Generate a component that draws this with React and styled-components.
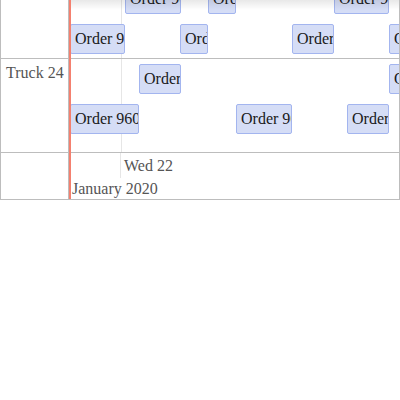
import React from "react";
import styled, { createGlobalStyle } from "styled-components";

const GlobalStyle = createGlobalStyle`
  body {
    margin: 0;
    background: #fff;
    font-family: "Liberation Serif", "Times New Roman", serif;
  }
`;

const rows = [
  {
    id: "r23",
    name: "",
    height: 59,
    events: [
      { id: 1, label: "Order 9612", left: 56, width: 56, top: -16 },
      { id: 2, label: "Order 9615", left: 139, width: 28, top: -16 },
      { id: 3, label: "Order 9621", left: 265, width: 55, top: -16 },
      { id: 4, label: "Order 9608", left: 1, width: 55, top: 24 },
      { id: 5, label: "Order 9613", left: 111, width: 28, top: 24 },
      { id: 6, label: "Order 9618", left: 223, width: 42, top: 24 },
      { id: 7, label: "Order 9624", left: 320, width: 40, top: 24 },
    ],
  },
  {
    id: "r24",
    name: "Truck 24",
    height: 94,
    events: [
      { id: 8, label: "Order 9611", left: 70, width: 42, top: 5 },
      { id: 9, label: "Order 9625", left: 320, width: 40, top: 5 },
      { id: 10, label: "Order 9604", left: 1, width: 69, top: 45 },
      { id: 11, label: "Order 9616", left: 167, width: 56, top: 45 },
      { id: 12, label: "Order 9620", left: 278, width: 42, top: 45 },
    ],
  },
];

const Scheduler = styled.div`
  position: relative;
  box-sizing: border-box;
  width: 400px;
  height: 200px;
  border: 1px solid #bdbdbd;
  border-top: none;
  display: grid;
  grid-template-columns: 68px 1fr;
  overflow: hidden;
`;

const ResourceCell = styled.div`
  box-sizing: border-box;
  height: ${(p) => p.$height}px;
  border-right: 1px solid #bdbdbd;
  border-bottom: 1px solid #bdbdbd;
  padding: 5px 0 0 5px;
  font-size: 16px;
  line-height: 18px;
  color: #555;
`;

const Lane = styled.div`
  position: relative;
  box-sizing: border-box;
  height: ${(p) => p.$height}px;
  border-bottom: 1px solid #bdbdbd;
  overflow: hidden;
  background-image: linear-gradient(
    to right,
    transparent 52px,
    #e6e6e6 52px,
    #e6e6e6 53px,
    transparent 53px
  );
`;

const Event = styled.div`
  position: absolute;
  box-sizing: border-box;
  height: 30px;
  padding: 0 4px;
  background: #d5ddf6;
  border: 1px solid #a3b5ef;
  border-radius: 2px;
  font-size: 16px;
  line-height: 28px;
  color: #1a1a1a;
  white-space: nowrap;
  overflow: hidden;
`;

const FooterCell = styled.div`
  box-sizing: border-box;
  border-right: 1px solid #bdbdbd;
`;

const FooterAxis = styled.div`
  display: grid;
  grid-template-rows: 25px 21px;
  font-size: 16px;
  color: #555;
`;

const DayRow = styled.div`
  display: grid;
  grid-template-columns: 52px 1fr;
`;

const DayCell = styled.div`
  box-sizing: border-box;
  line-height: 26px;
  padding-left: 3px;
  border-right: ${(p) => (p.$divider ? "1px solid #e6e6e6" : "none")};
  white-space: nowrap;
  overflow: hidden;
`;

const MonthCell = styled.div`
  line-height: 22px;
  padding-left: 3px;
  white-space: nowrap;
`;

const NowLine = styled.div`
  position: absolute;
  top: 0;
  bottom: 0;
  left: 68px;
  width: 2px;
  background: #f4806f;
  z-index: 3;
`;

const ScrollShadow = styled.div`
  position: absolute;
  top: 0;
  left: 68px;
  right: 0;
  height: 10px;
  background: linear-gradient(rgba(0, 0, 0, 0.09), rgba(0, 0, 0, 0));
  z-index: 2;
  pointer-events: none;
`;

export default function App() {
  return (
    <>
      <GlobalStyle />
      <Scheduler>
        {rows.map((row) => (
          <React.Fragment key={row.id}>
            <ResourceCell $height={row.height}>{row.name}</ResourceCell>
            <Lane $height={row.height}>
              {row.events.map((ev) => (
                <Event
                  key={ev.id}
                  style={{ left: ev.left, top: ev.top, width: ev.width }}
                >
                  {ev.label}
                </Event>
              ))}
            </Lane>
          </React.Fragment>
        ))}
        <FooterCell />
        <FooterAxis>
          <DayRow>
            <DayCell $divider />
            <DayCell>Wed 22</DayCell>
          </DayRow>
          <MonthCell>January 2020</MonthCell>
        </FooterAxis>
        <NowLine />
        <ScrollShadow />
      </Scheduler>
    </>
  );
}
